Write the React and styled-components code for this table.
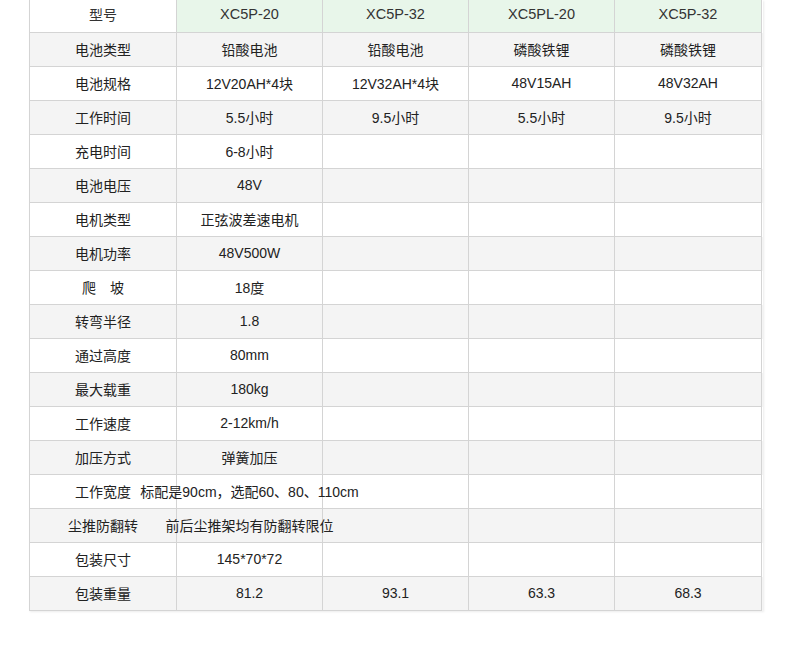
import React from "react";
import styled, { createGlobalStyle } from "styled-components";

const GlobalStyle = createGlobalStyle`
  body {
    margin: 0;
    background: #fff;
    font-family: "Liberation Sans", "Noto Sans CJK SC", sans-serif;
  }
`;

const models = ["XC5P-20", "XC5P-32", "XC5PL-20", "XC5P-32"];

const specs = [
  ["电池类型", "铅酸电池", "铅酸电池", "磷酸铁锂", "磷酸铁锂"],
  ["电池规格", "12V20AH*4块", "12V32AH*4块", "48V15AH", "48V32AH"],
  ["工作时间", "5.5小时", "9.5小时", "5.5小时", "9.5小时"],
  ["充电时间", "6-8小时", "", "", ""],
  ["电池电压", "48V", "", "", ""],
  ["电机类型", "正弦波差速电机", "", "", ""],
  ["电机功率", "48V500W", "", "", ""],
  ["爬\u3000坡", "18度", "", "", ""],
  ["转弯半径", "1.8", "", "", ""],
  ["通过高度", "80mm", "", "", ""],
  ["最大载重", "180kg", "", "", ""],
  ["工作速度", "2-12km/h", "", "", ""],
  ["加压方式", "弹簧加压", "", "", ""],
  ["工作宽度", "标配是90cm，选配60、80、110cm", "", "", ""],
  ["尘推防翻转", "前后尘推架均有防翻转限位", "", "", ""],
  ["包装尺寸", "145*70*72", "", "", ""],
  ["包装重量", "81.2", "93.1", "63.3", "68.3"],
];

export default function App() {
  return (
    <>
      <GlobalStyle />
      <Page>
        <SpecTable>
          <HeaderRow>
            <HeadCell>型号</HeadCell>
            {models.map((m, i) => (
              <HeadCell key={i} $model>
                {m}
              </HeadCell>
            ))}
          </HeaderRow>
          {specs.map((row, r) => (
            <Row key={r} $striped={r % 2 === 0}>
              {row.map((text, c) => (
                <Cell key={c}>{text}</Cell>
              ))}
            </Row>
          ))}
        </SpecTable>
      </Page>
    </>
  );
}

const Page = styled.div`
  padding: 0 0 40px 29px;
`;

const SpecTable = styled.div`
  width: 733px;
  border-left: 1px solid #d4d4d4;
  box-shadow: 1px 1px 2px rgba(0, 0, 0, 0.08);
`;

const Row = styled.div`
  display: grid;
  grid-template-columns: 147px 146px 146px 146px 147px;
  height: 34px;
  background: ${p => (p.$striped ? "#f4f4f4" : "#fff")};
`;

const HeaderRow = styled(Row)`
  height: 33px;
  background: #fff;
`;

const Cell = styled.div`
  display: flex;
  align-items: center;
  justify-content: center;
  white-space: nowrap;
  min-width: 0;
  border-right: 1px solid #d4d4d4;
  border-bottom: 1px solid #d4d4d4;
  font-size: 14px;
  color: #222;
  padding-bottom: 1px;
`;

const HeadCell = styled(Cell)`
  background: ${p => (p.$model ? "#e8f6ea" : "transparent")};
  color: #333;
  padding-bottom: 4px;
  font-size: ${p => (p.$model ? "14.5px" : "14px")};
`;
